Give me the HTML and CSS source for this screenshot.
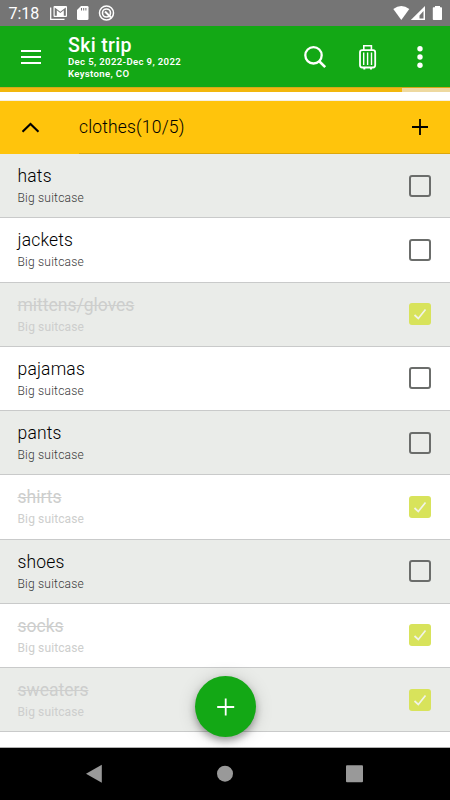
FILE: index.html
```html
<!DOCTYPE html>
<html lang="en">
<head>
<meta charset="utf-8">
<title>Ski trip</title>
<link rel="stylesheet" href="styles.css">
</head>
<body>
<div class="screen">
  <div class="status">
    <span class="clock">7:18</span>
    <svg class="status-left" width="66" height="26" viewBox="0 0 66 26">
      <path d="M.700 7.500V19.300H14.500" fill="none" stroke="#fff" stroke-width="1.300"/>
      <path fill="#fff" fill-rule="evenodd" d="M4.500 6H16Q17 6 17 7V16Q17 17 16 17H4.500Q3.500 17 3.500 16V7Q3.500 6 4.500 6ZM4.700 7.500V15.800H6.800V10.300L10.300 13.100L13.800 10.300V15.800H15.800V7.500L10.300 11.800Z"/>
      <path fill="#fff" d="M31 6H37.200Q38.500 6 38.500 7.300V18.700Q38.500 20 37.200 20H28.300Q27 20 27 18.700V10Z"/>
      <path d="M31.500 8V10.500M33.700 8V10.500M35.900 8V10.500" stroke="#757575" stroke-width="1"/>
      <circle cx="56.500" cy="13" r="7" fill="none" stroke="#fff" stroke-width="1.500"/>
      <circle cx="56.500" cy="13" r="4" fill="none" stroke="#fff" stroke-width="1.600"/>
      <path d="M55 11.500L61 17.500" stroke="#fff" stroke-width="2"/>
    </svg>
    <svg class="status-right" width="52" height="26" viewBox="0 0 52 26">
      <path fill="#fff" d="M.300 9Q8.300 2.800 16.300 9L8.300 20Z"/>
      <path fill="#fff" fill-rule="evenodd" d="M32 6V20H17.800ZM30.500 11L26.500 15.500V18.500H30.500Z"/>
      <path fill="#fff" d="M42 6V7.300H40.500Q39.800 7.300 39.800 8V19.200Q39.800 20 40.500 20H48.300Q49 20 49 19.200V8Q49 7.300 48.300 7.300H47V6Z"/>
    </svg>
  </div>
  <header class="bar">
    <svg class="menu" width="20" height="14" viewBox="0 0 20 14"><path d="M0 1H20M0 7H20M0 13H20" stroke="#fff" stroke-width="2"/></svg>
    <div class="heading">
      <h1>Ski trip</h1>
      <p class="dates">Dec 5, 2022-Dec 9, 2022</p>
      <p class="place">Keystone, CO</p>
    </div>
    <svg class="tools" width="150" height="30" viewBox="0 0 150 30">
      <g fill="none" stroke="#fff">
        <circle cx="13.500" cy="13.300" r="8.200" stroke-width="2.300"/>
        <path d="M19 19L25.200 25.200" stroke-width="2.600"/>
        <rect x="60" y="8.200" width="15.200" height="17.300" rx="2.200" stroke-width="1.800"/>
        <path d="M63.800 8V3.700H71.400V8" stroke-width="1.600"/>
        <path d="M63.700 10.500V23M67.600 10.500V23M71.500 10.500V23" stroke-width="1.400"/>
        <path d="M64.300 26V27.500M71 26V27.500" stroke-width="2"/>
      </g>
      <g fill="#fff"><circle cx="120" cy="6.800" r="2.700"/><circle cx="120" cy="15" r="2.700"/><circle cx="120" cy="23.200" r="2.700"/></g>
    </svg>
  </header>
  <div class="progress"><div class="done"></div></div>
  <section class="group">
    <svg class="chevron" width="18" height="11" viewBox="0 0 18 11"><path d="M.500 9.700L8.500 2L16.500 9.700" fill="none" stroke="#000" stroke-width="2.100"/></svg>
    <div class="group-main">
      <span class="group-name">clothes(10/5)</span>
      <svg width="16" height="16" viewBox="0 0 16 16"><path d="M8 0V16M0 8H16" stroke="#000" stroke-width="1.800"/></svg>
    </div>
  </section>
  <ul class="list">
    <li><div><b>hats</b><small>Big suitcase</small></div><i class="box"></i></li>
    <li><div><b>jackets</b><small>Big suitcase</small></div><i class="box"></i></li>
    <li class="packed"><div><b>mittens/gloves</b><small>Big suitcase</small></div><i class="box"><svg width="22" height="22" viewBox="0 0 22 22"><path d="M5.500 12L9.300 15.500L16.500 6.500"/></svg></i></li>
    <li><div><b>pajamas</b><small>Big suitcase</small></div><i class="box"></i></li>
    <li><div><b>pants</b><small>Big suitcase</small></div><i class="box"></i></li>
    <li class="packed"><div><b>shirts</b><small>Big suitcase</small></div><i class="box"><svg width="22" height="22" viewBox="0 0 22 22"><path d="M5.500 12L9.300 15.500L16.500 6.500"/></svg></i></li>
    <li><div><b>shoes</b><small>Big suitcase</small></div><i class="box"></i></li>
    <li class="packed"><div><b>socks</b><small>Big suitcase</small></div><i class="box"><svg width="22" height="22" viewBox="0 0 22 22"><path d="M5.500 12L9.300 15.500L16.500 6.500"/></svg></i></li>
    <li class="packed"><div><b>sweaters</b><small>Big suitcase</small></div><i class="box"><svg width="22" height="22" viewBox="0 0 22 22"><path d="M5.500 12L9.300 15.500L16.500 6.500"/></svg></i></li>
    <li><div><b>underwear</b></div></li>
  </ul>
  <nav class="nav">
    <svg width="450" height="52" viewBox="0 0 450 52" fill="#999"><path d="M86 25.700L101.800 16.800V34.800Z"/><circle cx="225" cy="25.700" r="8"/><rect x="346" y="17.300" width="17" height="17" rx="1"/></svg>
  </nav>
  <button class="fab" aria-label="Add"><svg width="18" height="18" viewBox="0 0 18 18"><path d="M8.700 .500V17.500M.200 9H17.200" stroke="#fff" stroke-width="1.800"/></svg></button>
</div>
</body>
</html>
```
FILE: styles.css
```css
* { box-sizing: border-box; }
body { margin: 0; font-family: Roboto, "Liberation Sans", sans-serif; }
.screen { position: relative; width: 450px; height: 800px; overflow: hidden; background: #fff; display: flex; flex-direction: column; }
svg { display: block; flex: none; }
.status { height: 26px; flex: none; background: #757575; color: #fff; display: flex; align-items: center; padding: 0 5px 0 8.500px; }
.clock { width: 41px; font-size: 16px; font-weight: 370; line-height: 26px; padding-top: 2px; }
.status-right { margin-left: auto; }
.bar { height: 61px; flex: none; background: #13a815; color: #fff; display: flex; align-items: flex-start; }
.menu { margin: 24px 27px 0 21px; }
.heading { flex: 1; padding-top: 8px; }
h1, p { margin: 0; white-space: nowrap; }
h1 { margin-bottom: -2px; font-size: 19.500px; font-weight: 500; line-height: 24px; letter-spacing: .35px; }
p { font-size: 9.600px; font-weight: 600; line-height: 12px; letter-spacing: .34px; }
.tools { margin: 16px 0 0; }
.progress { height: 5px; flex: none; background: #eed9a0; border-top: 1px solid #d5a71b; }
.done { width: 401.500px; height: 4px; background: #f2b70d; }
.group { height: 53px; flex: none; margin-top: 9px; background: #ffc40c; display: flex; box-shadow: 0 0 1px #c8a85a; }
.chevron { margin: 21px 0 0 22px; }
.group-main { flex: 1; margin-left: 39px; padding-right: 22px; display: flex; align-items: center; justify-content: space-between; border-bottom: 1px solid #dda70b; }
.group-name { font-size: 17.500px; font-weight: 350; letter-spacing: .17px; }
.list { list-style: none; margin: 0; padding: 0; flex: 1; min-height: 0; overflow: hidden; border-bottom: 1px solid #b0b0b0; }
li { height: 64.250px; display: flex; justify-content: space-between; padding: 11px 19px 0 17.500px; border-bottom: 1px solid #c9caca; }
li:nth-child(odd) { background: #eaece9; }
li:last-child { padding-top: 11.500px; }
b { display: block; font-weight: 350; font-size: 17.500px; line-height: 22px; letter-spacing: .17px; color: #000; }
small { display: block; margin-top: 4px; font-size: 12px; font-weight: 350; line-height: 15px; letter-spacing: .22px; color: #383838; }
.packed b, .packed small { color: #cdcecd; font-weight: 400; }
.packed b { text-decoration: line-through; letter-spacing: 0; }
.packed small { letter-spacing: .12px; }
.box { width: 22px; height: 22px; margin-top: 9.700px; border: 2px solid #6b6d6b; border-radius: 3px; }
.packed .box { border: 0; background: #d8e35b; }
.box path { fill: none; stroke: #f1f3e8; stroke-width: 1.700; }
.nav { height: 52px; flex: none; background: #000; }
.fab { position: absolute; left: 195px; top: 676px; width: 61px; height: 61px; padding: 0; border: 0; border-radius: 50%; background: #13a815; display: flex; align-items: center; justify-content: center; box-shadow: 0 4px 7px rgba(0,0,0,.3), 0 2px 18px rgba(0,0,0,.17); }
```
